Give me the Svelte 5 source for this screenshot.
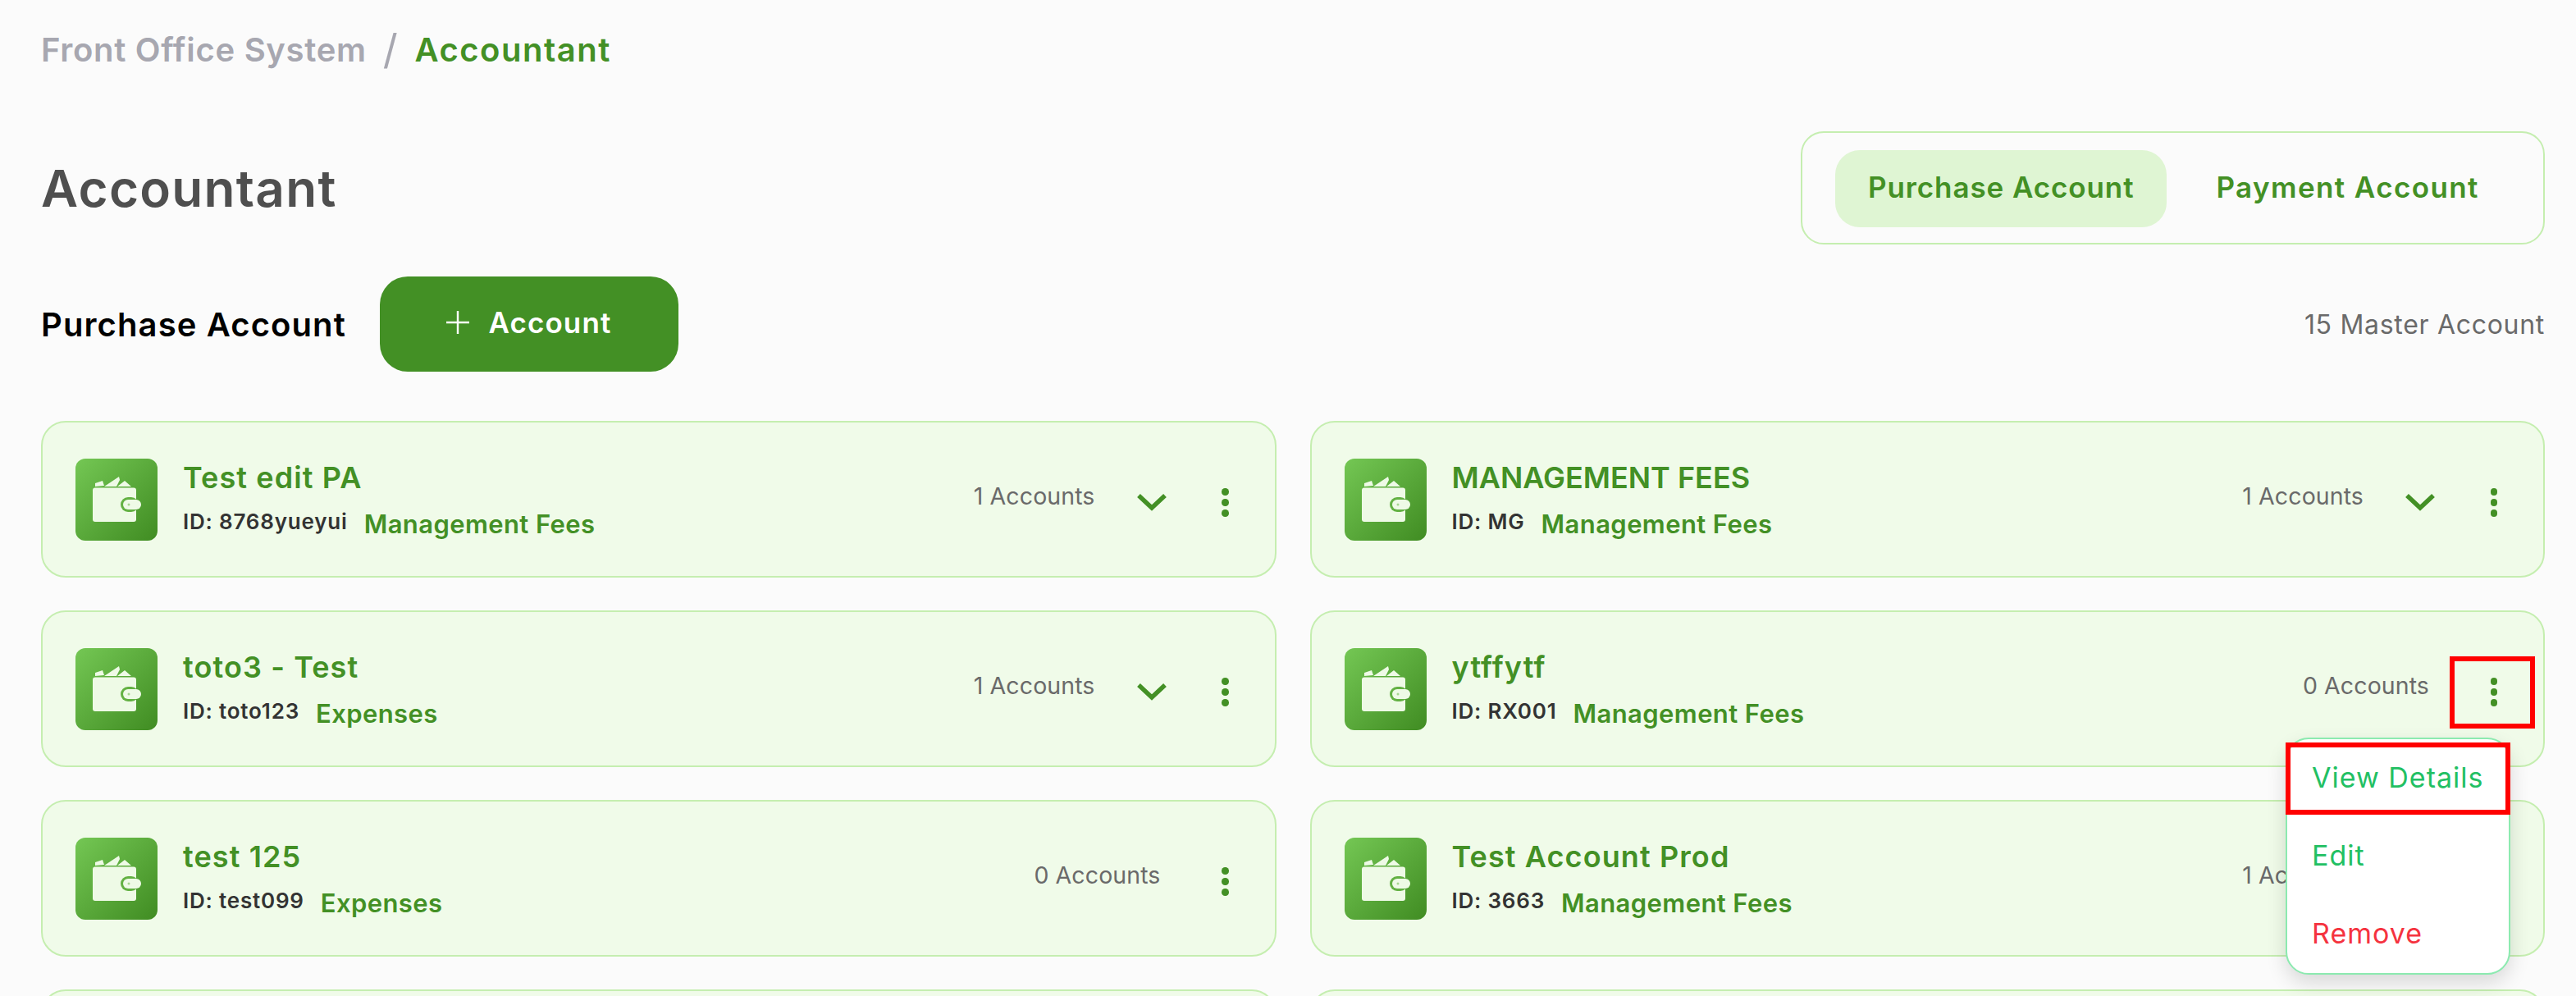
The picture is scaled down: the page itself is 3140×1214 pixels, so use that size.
<script>
  const cards = [
    { name: 'Test edit PA', id: '8768yueyui', category: 'Management Fees', count: 1 },
    { name: 'MANAGEMENT FEES', id: 'MG', category: 'Management Fees', count: 1 },
    { name: 'toto3 - Test', id: 'toto123', category: 'Expenses', count: 1 },
    { name: 'ytffytf', id: 'RX001', category: 'Management Fees', count: 0, open: true },
    { name: 'test 125', id: 'test099', category: 'Expenses', count: 0 },
    { name: 'Test Account Prod', id: '3663', category: 'Management Fees', count: 1 }
  ];
</script>

<div class="page">
  <nav class="crumbs">
    <span class="crumb-root">Front Office System</span>
    <span class="crumb-sep">/</span>
    <span class="crumb-current">Accountant</span>
  </nav>

  <header class="head">
    <h1>Accountant</h1>
    <div class="tabs">
      <button type="button" class="tab active">Purchase Account</button>
      <button type="button" class="tab">Payment Account</button>
    </div>
  </header>

  <div class="toolbar">
    <h2>Purchase Account</h2>
    <button type="button" class="add">
      <svg width="28" height="28" viewBox="0 0 28 28" aria-hidden="true">
        <path d="M14 0v28M0 14h28" stroke="#fff" stroke-width="2.4" fill="none" />
      </svg>
      <span>Account</span>
    </button>
    <span class="total">15 Master Account</span>
  </div>

  <div class="grid">
    {#each cards as card}
      <article class="card">
        <div class="wallet">
          <svg width="100" height="100" viewBox="0 0 100 100" aria-hidden="true">
            <path d="M24 30l9-3 2 6-11 1zM35 34l18-12 1 4-4 8zM51 34l9-7 8 7z" fill="#eefae6" />
            <rect x="21" y="35.500" width="53" height="41.500" rx="3" fill="#eefae6" />
            <rect x="55" y="47" width="22" height="18" rx="9" fill="#63b143" />
            <rect x="58" y="50" width="22" height="12" rx="6" fill="#eefae6" />
            <circle cx="65" cy="56" r="1.500" fill="#a5d68f" />
          </svg>
        </div>
        <div class="info">
          <div class="name" class:caps={card.name === card.name.toUpperCase()}>{card.name}</div>
          <div class="meta">
            <span class="id">ID: {card.id}</span>
            <span class="category">{card.category}</span>
          </div>
        </div>
        <span class="count">{card.count} Accounts</span>
        {#if card.count > 0}
          <button type="button" class="chevron" aria-label="Expand">
            <svg width="36" height="22" viewBox="0 0 36 22" aria-hidden="true">
              <path d="M2 3l16 15L34 3" stroke="#439025" stroke-width="5.500" fill="none" />
            </svg>
          </button>
        {/if}
        <button type="button" class="dots" class:marked={card.open} aria-label="More">
          <i></i><i></i><i></i>
        </button>
        {#if card.open}
          <ul class="menu">
            <li class="view marked">View Details</li>
            <li class="edit">Edit</li>
            <li class="remove">Remove</li>
          </ul>
        {/if}
      </article>
    {/each}
    <article class="card"></article>
    <article class="card"></article>
  </div>
</div>

<style>
  :global(body) {
    margin: 0;
    background: #fbfbfb;
  }

  .page {
    height: 1214px;
    overflow: hidden;
    box-sizing: border-box;
    padding: 36px 38px 0 50px;
    font-family: Inter, "Liberation Sans", sans-serif;
  }

  button {
    font-family: inherit;
    border: 0;
    background: none;
    padding: 0;
  }

  .crumbs {
    display: flex;
    align-items: center;
    height: 48px;
    font-size: 40px;
    font-weight: 600;
    letter-spacing: 0.7px;
  }

  .crumb-root {
    color: #a7a7b0;
  }

  .crumb-sep {
    margin: 0 20px;
    color: #a7a7b0;
    font-weight: 400;
    font-size: 50px;
  }

  .crumb-current {
    color: #439025;
    letter-spacing: 1.5px;
  }

  .head {
    display: flex;
    align-items: center;
    justify-content: space-between;
    margin-top: 76px;
  }

  h1 {
    margin: 0;
    font-size: 62px;
    font-weight: 600;
    color: #4f4f4f;
    letter-spacing: 1.3px;
  }

  .tabs {
    display: flex;
    box-sizing: border-box;
    width: 907px;
    height: 138px;
    padding: 21px 40px;
    gap: 20px;
    border: 2px solid #c5eeb0;
    border-radius: 28px;
  }

  .tab {
    box-sizing: border-box;
    height: 94px;
    padding: 0 40px 4px;
    border-radius: 30px;
    color: #439025;
    font-size: 35px;
    font-weight: 600;
    letter-spacing: 0.9px;
    white-space: nowrap;
  }

  .tab:last-child {
    letter-spacing: 1.4px;
  }

  .tab.active {
    background: #dff5d3;
  }

  .toolbar {
    display: flex;
    align-items: center;
    margin-top: 39px;
  }

  h2 {
    margin: 0 41px 0 0;
    font-size: 40px;
    font-weight: 600;
    color: #000;
    letter-spacing: 1.1px;
  }

  .add {
    display: flex;
    align-items: center;
    justify-content: center;
    gap: 23px;
    box-sizing: border-box;
    width: 364px;
    height: 116px;
    padding-bottom: 4px;
    border-radius: 34px;
    background: #439025;
    color: #fff;
    font-size: 35px;
    font-weight: 600;
    letter-spacing: 1.1px;
  }

  .total {
    margin-left: auto;
    font-size: 32px;
    letter-spacing: 0.7px;
    color: #6a6a6a;
  }

  .grid {
    display: grid;
    grid-template-columns: 1fr 1fr;
    gap: 40px 41px;
    margin-top: 60px;
  }

  .card {
    position: relative;
    display: flex;
    align-items: center;
    box-sizing: border-box;
    height: 191px;
    padding: 0 10px 0 40px;
    background: #f0fbe9;
    border: 2px solid #c5eeb0;
    border-radius: 30px;
  }

  .wallet {
    flex: none;
    width: 100px;
    height: 100px;
    border-radius: 12px;
    background: linear-gradient(135deg, #74c754, #408c22);
  }

  .wallet svg {
    display: block;
  }

  .info {
    margin-left: 31px;
  }

  .name {
    font-size: 36px;
    font-weight: 600;
    letter-spacing: 1.1px;
    color: #439025;
    line-height: 44px;
  }

  .name.caps {
    letter-spacing: 0;
  }

  .meta {
    display: flex;
    align-items: center;
    gap: 20px;
    margin-top: 16px;
  }

  .id {
    font-size: 26px;
    font-weight: 600;
    letter-spacing: 0.8px;
    color: #333;
    margin-top: -6px;
  }

  .category {
    font-size: 31px;
    font-weight: 600;
    letter-spacing: 0.4px;
    color: #439025;
  }

  .count {
    margin: -8px 0 0 auto;
    font-size: 28.500px;
    letter-spacing: 0.1px;
    color: #6a6a6a;
  }

  .chevron {
    display: flex;
    justify-content: center;
    box-sizing: border-box;
    width: 80px;
    margin: 6px 0 0 25px;
    padding-left: 8px;
  }

  .count + .dots {
    margin-left: 25px;
  }

  .dots {
    display: flex;
    flex-direction: column;
    align-items: center;
    justify-content: center;
    gap: 4.500px;
    box-sizing: border-box;
    width: 104px;
    height: 88px;
    margin-top: 8px;
    padding-left: 4px;
  }

  .dots i {
    width: 8.500px;
    height: 8.500px;
    border-radius: 50%;
    background: #439025;
  }

  .dots.marked {
    border: 6px solid #f00;
  }

  .menu {
    position: absolute;
    z-index: 2;
    top: 153px;
    right: 40px;
    box-sizing: border-box;
    width: 274px;
    height: 289px;
    margin: 0;
    padding: 4px 0 0;
    list-style: none;
    background: #fff;
    border: 2px solid #8ceab0;
    border-radius: 28px;
    box-shadow: 0 10px 24px rgba(0, 0, 0, 0.14);
    font-size: 34px;
    letter-spacing: 1px;
  }

  .menu li {
    display: flex;
    align-items: center;
    box-sizing: border-box;
    height: 95px;
    padding-left: 30px;
  }

  .menu li.marked {
    height: 88px;
    margin: 0 -2px 2px;
    padding: 0 0 4px 26px;
    border: 6px solid #f00;
  }

  .view,
  .edit {
    color: #22c063;
  }

  .remove {
    color: #f5333f;
  }
</style>
